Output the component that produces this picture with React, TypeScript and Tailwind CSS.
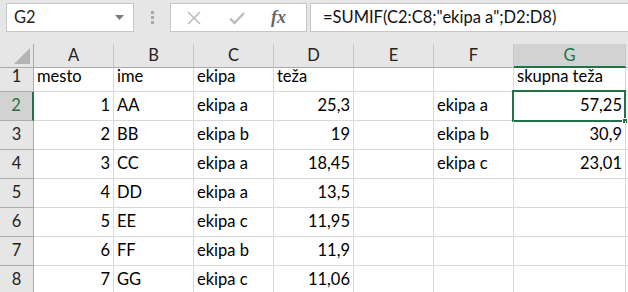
import React from 'react';

const cols = ['A', 'B', 'C', 'D', 'E', 'F', 'G'];

type Cell = { v: string; num?: boolean };

const rows: Cell[][] = [
  [{ v: 'mesto' }, { v: 'ime' }, { v: 'ekipa' }, { v: 'teža' }, { v: '' }, { v: '' }, { v: 'skupna teža' }],
  [{ v: '1', num: true }, { v: 'AA' }, { v: 'ekipa a' }, { v: '25,3', num: true }, { v: '' }, { v: 'ekipa a' }, { v: '57,25', num: true }],
  [{ v: '2', num: true }, { v: 'BB' }, { v: 'ekipa b' }, { v: '19', num: true }, { v: '' }, { v: 'ekipa b' }, { v: '30,9', num: true }],
  [{ v: '3', num: true }, { v: 'CC' }, { v: 'ekipa a' }, { v: '18,45', num: true }, { v: '' }, { v: 'ekipa c' }, { v: '23,01', num: true }],
  [{ v: '4', num: true }, { v: 'DD' }, { v: 'ekipa a' }, { v: '13,5', num: true }, { v: '' }, { v: '' }, { v: '' }],
  [{ v: '5', num: true }, { v: 'EE' }, { v: 'ekipa c' }, { v: '11,95', num: true }, { v: '' }, { v: '' }, { v: '' }],
  [{ v: '6', num: true }, { v: 'FF' }, { v: 'ekipa b' }, { v: '11,9', num: true }, { v: '' }, { v: '' }, { v: '' }],
  [{ v: '7', num: true }, { v: 'GG' }, { v: 'ekipa c' }, { v: '11,06', num: true }, { v: '' }, { v: '' }, { v: '' }],
];

const FormulaBar = () => (
  <div className="flex h-[44px] items-start bg-[#e6e6e6] pt-[3px]">
    <div className="ml-[6px] flex h-[29px] w-[128px] shrink-0 items-center justify-between border border-[#c6c6c6] bg-white pl-[7px] pr-[9px]">
      <span className="text-[16.5px] text-[#222]">G2</span>
      <svg width="9" height="5" viewBox="0 0 9 5">
        <path d="M0 0 H9 L4.5 5 Z" fill="#7a7a7a" />
      </svg>
    </div>
    <div className="flex h-[29px] w-[36px] shrink-0 flex-col items-center justify-center gap-[2px]">
      <span className="h-[3px] w-[3px] bg-[#a8a8a8]" />
      <span className="h-[3px] w-[3px] bg-[#a8a8a8]" />
      <span className="h-[3px] w-[3px] bg-[#a8a8a8]" />
    </div>
    <div className="relative flex h-[29px] w-[137px] shrink-0 items-center border border-[#c6c6c6] bg-white">
      <svg className="ml-[16px]" width="14" height="14" viewBox="0 0 14 14">
        <path d="M1 1 L13 13 M13 1 L1 13" stroke="#bdbdbd" strokeWidth="1.6" fill="none" />
      </svg>
      <svg className="ml-[28px]" width="16" height="14" viewBox="0 0 16 14">
        <path d="M1 7.5 L5.5 12 L15 2" stroke="#bdbdbd" strokeWidth="2.4" fill="none" />
      </svg>
      <span className="ml-[26px] font-['Liberation_Serif',serif] text-[18px] font-bold italic text-[#666]">fx</span>
    </div>
    <div className="ml-[3px] flex h-[29px] w-[330px] shrink-0 items-center border border-[#c6c6c6] bg-white pl-[12px]">
      <span className="text-[16.5px] text-[#111]">=SUMIF(C2:C8;"ekipa a";D2:D8)</span>
    </div>
  </div>
);

export default function App() {
  return (
    <div className="h-[292px] w-[628px] overflow-hidden bg-white font-['Lato',sans-serif]">
      <FormulaBar />
      <div className="grid grid-cols-[34px_80px_80px_80px_80px_80px_80px_112px_40px]">
        {/* header row */}
        <div className="relative h-[24px] border-b border-r border-b-[#ababab] border-r-[#ababab] bg-[#e6e6e6]">
          <svg className="absolute bottom-[3px] right-[3px]" width="16" height="16" viewBox="0 0 16 16">
            <path d="M16 0 V16 H0 Z" fill="#b4b4b4" />
          </svg>
        </div>
        {cols.map((c) => (
          <div
            key={c}
            className={
              c === 'G'
                ? 'flex h-[24px] items-center justify-center border-b-2 border-r border-b-[#217346] border-r-[#c6c6c6] bg-[#d2d2d2] text-[16.5px] text-[#217346]'
                : 'flex h-[24px] items-center justify-center border-b border-r border-b-[#ababab] border-r-[#c6c6c6] bg-[#e6e6e6] text-[16.5px] text-[#222]'
            }
          >
            {c}
          </div>
        ))}
        <div className="h-[24px] border-b border-b-[#ababab] bg-[#e6e6e6]" />

        {rows.map((r, i) => {
          const h = i === 0 ? 'h-[24px]' : 'h-[29px]';
          const sel = i === 1;
          return (
            <React.Fragment key={i}>
              <div
                className={
                  sel
                    ? `flex ${h} items-end justify-center border-b border-r-2 border-b-[#ababab] border-r-[#217346] bg-[#d2d2d2] pb-[2px] text-[16.5px] text-[#217346]`
                    : `flex ${h} items-end justify-center border-b border-r border-b-[#ababab] border-r-[#ababab] bg-[#e6e6e6] pb-[2px] text-[16.5px] text-[#222]`
                }
              >
                {i + 1}
              </div>
              {r.map((cell, j) => (
                <div
                  key={j}
                  className={`relative flex ${h} items-end whitespace-nowrap border-b border-r border-[#d9d9d9] px-[3px] pb-[2px] text-[16.5px] text-black ${
                    cell.num ? 'justify-end' : 'justify-start'
                  }`}
                >
                  {cell.v}
                  {sel && j === 6 && (
                    <div className="absolute -left-[2px] -top-[2px] h-[32px] w-[114px] border-2 border-[#217346]">
                      <div className="absolute -bottom-[4px] -right-[4px] h-[6px] w-[6px] border border-white bg-[#217346]" />
                    </div>
                  )}
                </div>
              ))}
              <div className={`${h} border-b border-[#d9d9d9]`} />
            </React.Fragment>
          );
        })}
      </div>
    </div>
  );
}
